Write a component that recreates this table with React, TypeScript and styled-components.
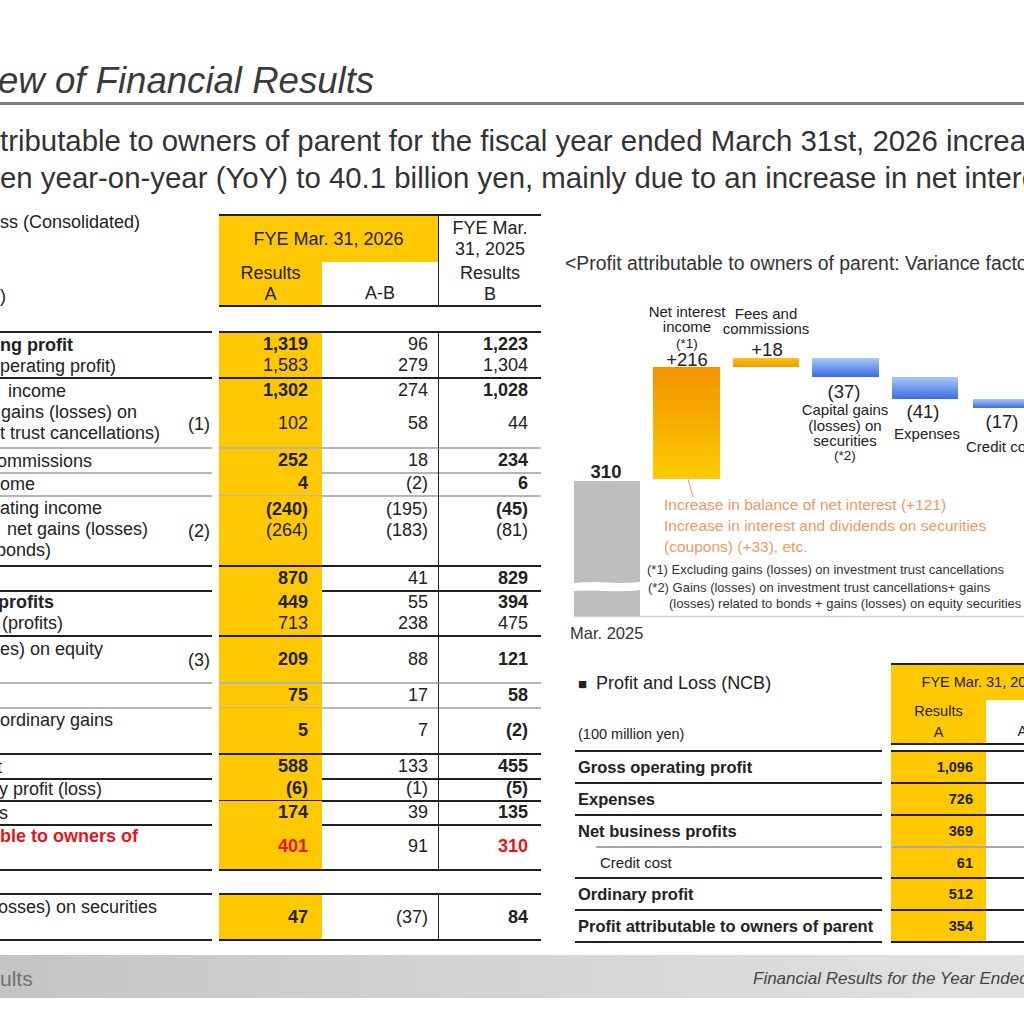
import React from "react";
import styled, { createGlobalStyle } from "styled-components";

const GlobalStyle = createGlobalStyle`
  html, body { margin: 0; padding: 0; background: #fff; }
  body { font-family: "Liberation Sans", Arial, sans-serif; color: #222; }
  * { box-sizing: border-box; }
`;

const YELLOW = "#ffc800";
const DARK = "#1f1f1f";
const COLS = "212px 7px 103px 116px 103px";
const NCB_COLS = "307px 9px 95px 87px";

type Line = "thick" | "thin" | "none";
const border = (l: Line) =>
  l === "thick" ? `2px solid ${DARK}` : l === "thin" ? "2px solid #b5b5b5" : "0";

const Page = styled.div`
  width: 1024px;
  height: 1024px;
  overflow: hidden;
  display: flex;
  flex-direction: column;
  background: #fff;
`;

const TitleBar = styled.div`
  padding-top: 61px;
  padding-bottom: 1px;
  border-bottom: 3px solid #7d7d7d;
`;

const Title = styled.h1`
  margin: 0 0 0 -2px;
  font-size: 36.6px;
  line-height: 40px;
  font-style: italic;
  font-weight: normal;
  color: #3a3a3a;
  white-space: nowrap;
`;

const Lead = styled.div`
  margin-top: 18px;
  font-size: 29.4px;
  line-height: 36.5px;
  color: #333;
  white-space: nowrap;
`;

const Main = styled.div`
  display: flex;
  align-items: flex-start;
  margin-top: 18px;
`;

const LeftTable = styled.div`
  flex: none;
  width: 541px;
  font-size: 18px;
  line-height: 21px;
`;

const HeadGrid = styled.div`
  display: grid;
  grid-template-columns: ${COLS};
  grid-template-rows: 48px 45px;
`;

const HeadLabel = styled.div`
  grid-column: 1;
  grid-row: 1 / span 2;
  display: flex;
  flex-direction: column;
  justify-content: space-between;
  white-space: nowrap;
  span:first-child { margin-top: -2px; }
`;

const HeadCell = styled.div<{ $col: string; $row: number; $yellow?: boolean; $left?: boolean; $align?: string }>`
  grid-column: ${(p) => p.$col};
  grid-row: ${(p) => p.$row};
  background: ${(p) => (p.$yellow ? YELLOW : "transparent")};
  border-top: ${(p) => (p.$row === 1 ? `2px solid ${DARK}` : "0")};
  border-bottom: ${(p) => (p.$row === 2 ? `2px solid ${DARK}` : "0")};
  border-left: ${(p) => (p.$left ? `1px solid ${DARK}` : "0")};
  display: flex;
  flex-direction: column;
  justify-content: ${(p) => p.$align || "center"};
  align-items: center;
  text-align: center;
  white-space: nowrap;
`;

const Body = styled.div`
  margin-top: 24px;
`;

const BodyRow = styled.div<{ $h: number; $gap?: number }>`
  display: grid;
  grid-template-columns: ${COLS};
  height: ${(p) => p.$h}px;
  margin-top: ${(p) => p.$gap || 0}px;
`;

const LabelCell = styled.div<{ $line: Line; $top?: boolean }>`
  display: flex;
  justify-content: space-between;
  align-items: flex-start;
  padding-top: 2px;
  border-top: ${(p) => (p.$top ? `2px solid ${DARK}` : "0")};
  border-bottom: ${(p) => border(p.$line)};
  white-space: nowrap;
`;

const LabelText = styled.div`
  display: flex;
  flex-direction: column;
`;

const LabelLine = styled.span<{ $bold?: boolean; $red?: boolean; $shift?: number }>`
  display: block;
  font-weight: ${(p) => (p.$bold ? "bold" : "normal")};
  color: ${(p) => (p.$red ? "#e3161b" : "#222")};
  margin-left: ${(p) => p.$shift || 0}px;
  min-height: 21px;
`;

const Note = styled.span`
  align-self: center;
  padding-right: 2px;
`;

const NumCell = styled.div<{ $line: Line; $top?: boolean; $yellow?: boolean; $left?: boolean; $pr: number; $valTop?: boolean }>`
  display: flex;
  flex-direction: column;
  align-items: flex-end;
  justify-content: ${(p) => (p.$valTop ? "flex-start" : "center")};
  padding-top: ${(p) => (p.$valTop ? 3 : 0)}px;
  padding-right: ${(p) => p.$pr}px;
  background: ${(p) => (p.$yellow ? YELLOW : "transparent")};
  border-top: ${(p) => (p.$top ? `2px solid ${DARK}` : "0")};
  border-bottom: ${(p) => border(p.$line)};
  border-left: ${(p) => (p.$left ? `1px solid ${DARK}` : "0")};
`;

const Num = styled.span<{ $bold?: boolean; $red?: boolean }>`
  font-weight: ${(p) => (p.$bold ? "bold" : "normal")};
  color: ${(p) => (p.$red ? "#e3161b" : "#222")};
`;

const RightPanel = styled.div`
  flex: none;
  width: 520px;
  margin-left: 24px;
`;

const ChartTitle = styled.div`
  margin-top: 38px;
  font-size: 19.4px;
  line-height: 22px;
  color: #333;
  white-space: nowrap;
`;

const ChartSvg = styled.svg`
  display: block;
  margin-top: 16px;
  font-family: "Liberation Sans", Arial, sans-serif;
  text { fill: #222; }
`;

const NcbWrap = styled.div`
  margin-top: 18px;
  margin-left: 10px;
`;

const NcbHead = styled.div`
  display: grid;
  grid-template-columns: ${NCB_COLS};
  grid-template-rows: 37px 45px;
  font-size: 14.5px;
  line-height: 21px;
`;

const NcbHeadLabel = styled.div`
  grid-column: 1;
  grid-row: 1 / span 2;
  display: flex;
  flex-direction: column;
  justify-content: space-between;
  padding: 10px 0 0 3px;
  white-space: nowrap;
`;

const NcbTitle = styled.span`
  font-size: 18px;
  line-height: 21px;
  color: #222;
  &::before {
    content: "■";
    font-size: 15px;
    margin-right: 9px;
    vertical-align: 0;
  }
`;

const NcbUnit = styled.span`
  font-size: 14.5px;
  line-height: 20px;
  color: #222;
  margin-bottom: 1px;
`;

const NcbRow = styled.div<{ $h: number; $first?: boolean }>`
  display: grid;
  grid-template-columns: ${NCB_COLS};
  height: ${(p) => p.$h}px;
  margin-top: ${(p) => (p.$first ? 5 : 0)}px;
`;

const NcbLabel = styled.div<{ $first?: boolean; $soft?: boolean; $sub?: boolean }>`
  display: flex;
  align-items: center;
  padding-left: ${(p) => (p.$sub ? 25 : 3)}px;
  font-size: ${(p) => (p.$sub ? 15 : 16.5)}px;
  font-weight: ${(p) => (p.$sub ? "normal" : "bold")};
  white-space: nowrap;
  border-top: ${(p) => (p.$first ? `2px solid ${DARK}` : "0")};
  border-bottom: 2px solid ${(p) => (p.$soft ? "#a8a8a8" : DARK)};
  ${(p) =>
    p.$soft &&
    `border-image: linear-gradient(to right, transparent 22px, #a8a8a8 22px) 1;`}
`;

const NcbNum = styled.div<{ $first?: boolean; $soft?: boolean; $yellow?: boolean }>`
  display: flex;
  align-items: center;
  justify-content: flex-end;
  padding-right: 13px;
  font-size: 14.5px;
  font-weight: bold;
  background: ${(p) => (p.$yellow ? YELLOW : "transparent")};
  border-top: ${(p) => (p.$first ? `2px solid ${DARK}` : "0")};
  border-bottom: 2px solid ${(p) => (p.$soft ? "#a8a8a8" : DARK)};
`;

const Footer = styled.div`
  margin-top: auto;
  margin-bottom: 26px;
  height: 43px;
  flex: none;
  display: grid;
  grid-template-columns: 753px 1fr;
  align-items: center;
  background: linear-gradient(90deg, #c4c4c4 0%, #d3d3d3 45%, #e2e2e2 100%);
  white-space: nowrap;
`;

const FooterLeft = styled.span`
  font-size: 21px;
  color: #6e6e6e;
  margin-top: 4px;
`;

const FooterRight = styled.span`
  font-size: 17px;
  font-style: italic;
  color: #444;
  margin-top: 4px;
`;

type Cell = { v: string; b?: boolean; red?: boolean };
type LabelPart = { t: string; b?: boolean; red?: boolean; shift?: number };
type Row = {
  h: number;
  label: LabelPart[];
  note?: string;
  a: Cell[];
  ab: Cell[];
  bb: Cell[];
  line: Line;
  top?: boolean;
  valTop?: boolean;
  gap?: number;
};

const rows: Row[] = [
  {
    h: 48, top: true, line: "thick",
    label: [{ t: "ng profit", b: true }, { t: "perating profit)" }],
    a: [{ v: "1,319", b: true }, { v: "1,583" }],
    ab: [{ v: "96" }, { v: "279" }],
    bb: [{ v: "1,223", b: true }, { v: "1,304" }],
  },
  {
    h: 21, line: "none",
    label: [{ t: "income", shift: 8 }],
    a: [{ v: "1,302", b: true }], ab: [{ v: "274" }], bb: [{ v: "1,028", b: true }],
  },
  {
    h: 49, line: "thin", note: "(1)",
    label: [{ t: "gains (losses) on", shift: 1 }, { t: "t trust cancellations)" }],
    a: [{ v: "102" }], ab: [{ v: "58" }], bb: [{ v: "44" }],
  },
  {
    h: 23, line: "thin",
    label: [{ t: "ommissions", shift: -3 }],
    a: [{ v: "252", b: true }], ab: [{ v: "18" }], bb: [{ v: "234", b: true }],
  },
  {
    h: 24, line: "thin",
    label: [{ t: "ome" }],
    a: [{ v: "4", b: true }], ab: [{ v: "(2)" }], bb: [{ v: "6", b: true }],
  },
  {
    h: 71, line: "thick", note: "(2)", valTop: true,
    label: [{ t: "ating income" }, { t: "net gains (losses)", shift: 7 }, { t: "bonds)", shift: -4 }],
    a: [{ v: "(240)", b: true }, { v: "(264)" }],
    ab: [{ v: "(195)" }, { v: "(183)" }],
    bb: [{ v: "(45)", b: true }, { v: "(81)" }],
  },
  {
    h: 23, line: "thick",
    label: [{ t: "" }],
    a: [{ v: "870", b: true }], ab: [{ v: "41" }], bb: [{ v: "829", b: true }],
  },
  {
    h: 47, line: "thick",
    label: [{ t: "profits", b: true, shift: -2 }, { t: "(profits)", shift: 2 }],
    a: [{ v: "449", b: true }, { v: "713" }],
    ab: [{ v: "55" }, { v: "238" }],
    bb: [{ v: "394", b: true }, { v: "475" }],
  },
  {
    h: 47, line: "thin", note: "(3)",
    label: [{ t: "es) on equity" }],
    a: [{ v: "209", b: true }], ab: [{ v: "88" }], bb: [{ v: "121", b: true }],
  },
  {
    h: 24, line: "thin",
    label: [{ t: "" }],
    a: [{ v: "75", b: true }], ab: [{ v: "17" }], bb: [{ v: "58", b: true }],
  },
  {
    h: 47, line: "thick",
    label: [{ t: "ordinary gains" }],
    a: [{ v: "5", b: true }], ab: [{ v: "7" }], bb: [{ v: "(2)", b: true }],
  },
  {
    h: 22, line: "thick",
    label: [{ t: "t", shift: -3 }],
    a: [{ v: "588", b: true }], ab: [{ v: "133" }], bb: [{ v: "455", b: true }],
  },
  {
    h: 24, line: "thick",
    label: [{ t: "y profit (loss)", shift: -1 }],
    a: [{ v: "(6)", b: true }], ab: [{ v: "(1)" }], bb: [{ v: "(5)", b: true }],
  },
  {
    h: 23, line: "thick",
    label: [{ t: "s", shift: -1 }],
    a: [{ v: "174", b: true }], ab: [{ v: "39" }], bb: [{ v: "135", b: true }],
  },
  {
    h: 47, line: "thick",
    label: [{ t: "ble to owners of", b: true, red: true }],
    a: [{ v: "401", b: true, red: true }], ab: [{ v: "91" }], bb: [{ v: "310", b: true, red: true }],
  },
  {
    h: 48, line: "thick", top: true, gap: 22,
    label: [{ t: "osses) on securities", shift: -2 }],
    a: [{ v: "47", b: true }], ab: [{ v: "(37)" }], bb: [{ v: "84", b: true }],
  },
];

const ncbRows = [
  { label: "Gross operating profit", v: "1,096", h: 34, first: true },
  { label: "Expenses", v: "726", h: 32 },
  { label: "Net business profits", v: "369", h: 32, soft: true },
  { label: "Credit cost", v: "61", h: 31, sub: true },
  { label: "Ordinary profit", v: "512", h: 32 },
  { label: "Profit attributable to owners of parent", v: "354", h: 32 },
];

const Values: React.FC<{ cells: Cell[] }> = ({ cells }) => (
  <>
    {cells.map((c, i) => (
      <Num key={i} $bold={c.b} $red={c.red}>
        {c.v}
      </Num>
    ))}
  </>
);

const Waterfall = () => (
  <ChartSvg width={520} height={355} viewBox="0 0 520 355">
    <defs>
      <linearGradient id="gOrange" x1="0" y1="0" x2="0" y2="1">
        <stop offset="0" stopColor="#f39200" />
        <stop offset="1" stopColor="#ffcc00" />
      </linearGradient>
      <linearGradient id="gFee" x1="0" y1="0" x2="0" y2="1">
        <stop offset="0" stopColor="#ffbf10" />
        <stop offset="1" stopColor="#f39a00" />
      </linearGradient>
      <linearGradient id="gBlue" x1="0" y1="0" x2="0" y2="1">
        <stop offset="0" stopColor="#a9c8f8" />
        <stop offset="1" stopColor="#3b6ce2" />
      </linearGradient>
    </defs>

    <path d="M9 191 H75 V292 Q58 293.5 42 292.5 T9 293 Z" fill="#bebebe" />
    <path d="M9 301 Q26 300 42 301 T75 300 V326 H9 Z" fill="#bebebe" />
    <line x1="9" y1="326.5" x2="520" y2="326.5" stroke="#d2d2d2" strokeWidth="1.5" />
    <text x="41" y="188" fontSize="18.5" fontWeight="bold" textAnchor="middle">310</text>
    <text x="5" y="349" fontSize="16.5" style={{ fill: "#333" }}>Mar. 2025</text>

    <rect x="88" y="77" width="67" height="112" fill="url(#gOrange)" />
    <text x="122" y="27" fontSize="15" textAnchor="middle">Net interest</text>
    <text x="122" y="42" fontSize="15" textAnchor="middle">income</text>
    <text x="122" y="58" fontSize="13.5" textAnchor="middle">(*1)</text>
    <text x="122" y="76" fontSize="18.5" textAnchor="middle">+216</text>

    <rect x="168" y="68" width="66" height="9" fill="url(#gFee)" />
    <text x="201" y="29" fontSize="15" textAnchor="middle">Fees and</text>
    <text x="201" y="44" fontSize="15" textAnchor="middle">commissions</text>
    <text x="202" y="66" fontSize="18.5" textAnchor="middle">+18</text>

    <rect x="247" y="68" width="67" height="19" fill="url(#gBlue)" />
    <text x="279" y="108" fontSize="18.5" textAnchor="middle">(37)</text>
    <text x="280" y="125" fontSize="15" textAnchor="middle">Capital gains</text>
    <text x="280" y="141" fontSize="15" textAnchor="middle">(losses) on</text>
    <text x="280" y="156" fontSize="15" textAnchor="middle">securities</text>
    <text x="280" y="170" fontSize="13.5" textAnchor="middle">(*2)</text>

    <rect x="327" y="87" width="66" height="22" fill="url(#gBlue)" />
    <text x="358" y="128" fontSize="18.5" textAnchor="middle">(41)</text>
    <text x="362" y="149" fontSize="15" textAnchor="middle">Expenses</text>

    <rect x="408" y="109" width="67" height="9" fill="url(#gBlue)" />
    <text x="437" y="138" fontSize="18.5" textAnchor="middle">(17)</text>
    <text x="401" y="162" fontSize="15">Credit cost</text>

    <line x1="123" y1="189" x2="128" y2="207" stroke="#e59a6a" strokeWidth="1" />
    <text x="99" y="220" fontSize="15.5" style={{ fill: "#ec9a5f" }}>Increase in balance of net interest (+121)</text>
    <text x="99" y="241" fontSize="15.5" style={{ fill: "#ec9a5f" }}>Increase in interest and dividends on securities</text>
    <text x="99" y="262" fontSize="15.5" style={{ fill: "#ec9a5f" }}>(coupons) (+33), etc.</text>

    <text x="82" y="284" fontSize="13" style={{ fill: "#333" }}>(*1) Excluding gains (losses) on investment trust cancellations</text>
    <text x="83" y="302" fontSize="13" style={{ fill: "#333" }}>(*2) Gains (losses) on investment trust cancellations+ gains</text>
    <text x="104" y="318" fontSize="13" style={{ fill: "#333" }}>(losses) related to bonds + gains (losses) on equity securities</text>
  </ChartSvg>
);

const App: React.FC = () => {
  return (
    <Page>
      <GlobalStyle />
      <TitleBar>
        <Title>ew of Financial Results</Title>
      </TitleBar>
      <Lead>
        <div>tributable to owners of parent for the fiscal year ended March 31st, 2026 increased</div>
        <div>en year-on-year (YoY) to 40.1 billion yen, mainly due to an increase in net interest income.</div>
      </Lead>

      <Main>
        <LeftTable>
          <HeadGrid>
            <HeadLabel>
              <span>ss (Consolidated)</span>
              <span>)</span>
            </HeadLabel>
            <HeadCell $col="3 / span 2" $row={1} $yellow>FYE Mar. 31, 2026</HeadCell>
            <HeadCell $col="5" $row={1} $left>
              <span>FYE Mar.</span>
              <span>31, 2025</span>
            </HeadCell>
            <HeadCell $col="3" $row={2} $yellow>
              <span>Results</span>
              <span>A</span>
            </HeadCell>
            <HeadCell $col="4" $row={2} $align="flex-end">
              <span style={{ marginBottom: 1 }}>A-B</span>
            </HeadCell>
            <HeadCell $col="5" $row={2} $left>
              <span>Results</span>
              <span>B</span>
            </HeadCell>
          </HeadGrid>

          <Body>
            {rows.map((r, i) => (
              <BodyRow key={i} $h={r.h} $gap={r.gap}>
                <LabelCell $line={r.line} $top={r.top}>
                  <LabelText>
                    {r.label.map((l, j) => (
                      <LabelLine key={j} $bold={l.b} $red={l.red} $shift={l.shift}>
                        {l.t}
                      </LabelLine>
                    ))}
                  </LabelText>
                  {r.note && <Note>{r.note}</Note>}
                </LabelCell>
                <div />
                <NumCell $line={r.line} $top={r.top} $yellow $pr={14} $valTop={r.valTop}>
                  <Values cells={r.a} />
                </NumCell>
                <NumCell $line={r.line} $top={r.top} $pr={10} $valTop={r.valTop}>
                  <Values cells={r.ab} />
                </NumCell>
                <NumCell $line={r.line} $top={r.top} $left $pr={13} $valTop={r.valTop}>
                  <Values cells={r.bb} />
                </NumCell>
              </BodyRow>
            ))}
          </Body>
        </LeftTable>

        <RightPanel>
          <ChartTitle>&lt;Profit attributable to owners of parent: Variance factors&gt;</ChartTitle>
          <Waterfall />

          <NcbWrap>
            <NcbHead>
              <NcbHeadLabel>
                <NcbTitle>Profit and Loss (NCB)</NcbTitle>
                <NcbUnit>(100 million yen)</NcbUnit>
              </NcbHeadLabel>
              <HeadCell $col="3 / span 2" $row={1} $yellow>FYE Mar. 31, 2026</HeadCell>
              <HeadCell $col="3" $row={2} $yellow>
                <span>Results</span>
                <span>A</span>
              </HeadCell>
              <HeadCell $col="4" $row={2} $align="flex-end">
                <span style={{ marginBottom: 1 }}>A-B</span>
              </HeadCell>
            </NcbHead>
            {ncbRows.map((r, i) => (
              <NcbRow key={i} $h={r.h} $first={r.first}>
                <NcbLabel $first={r.first} $soft={r.soft} $sub={r.sub}>{r.label}</NcbLabel>
                <div />
                <NcbNum $first={r.first} $soft={r.soft} $yellow>{r.v}</NcbNum>
                <NcbNum $first={r.first} $soft={r.soft} />
              </NcbRow>
            ))}
          </NcbWrap>
        </RightPanel>
      </Main>

      <Footer>
        <FooterLeft>ults</FooterLeft>
        <FooterRight>Financial Results for the Year Ended March 31, 2026</FooterRight>
      </Footer>
    </Page>
  );
};

export default App;
